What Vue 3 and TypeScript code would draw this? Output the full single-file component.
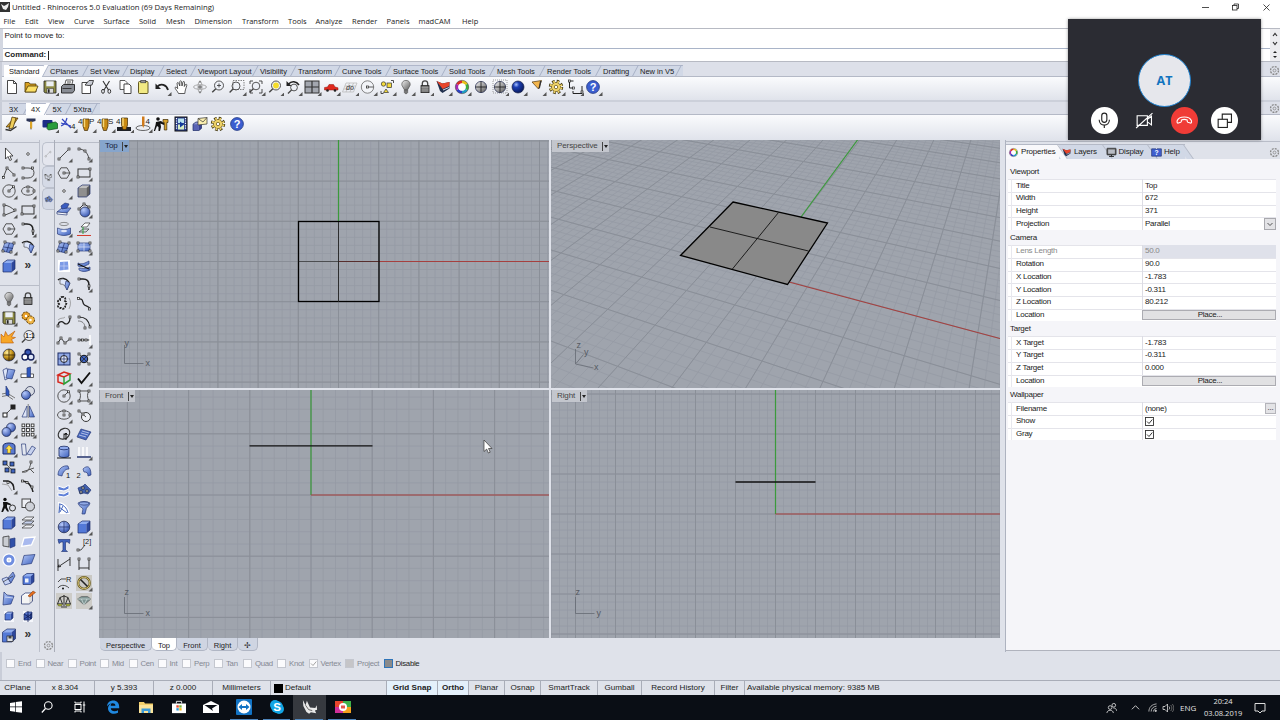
<script setup lang="ts">
import { computed, ref } from 'vue'

interface Cell { label: string; w: number }
interface PropRow { label: string; value?: string; kind?: 'select' | 'button' | 'file' | 'check' | 'disabled' }

const menus: Cell[] = [
  { label: 'File', w: 21.5 }, { label: 'Edit', w: 23 }, { label: 'View', w: 26 }, { label: 'Curve', w: 29.5 },
  { label: 'Surface', w: 35.5 }, { label: 'Solid', w: 27 }, { label: 'Mesh', w: 28.5 }, { label: 'Dimension', w: 47.5 },
  { label: 'Transform', w: 46 }, { label: 'Tools', w: 27.5 }, { label: 'Analyze', w: 36.5 }, { label: 'Render', w: 34.5 },
  { label: 'Panels', w: 32 }, { label: 'madCAM', w: 43.5 }, { label: 'Help', w: 30 },
]

const toolTabs: Cell[] = [
  { label: 'Standard', w: 41 }, { label: 'CPlanes', w: 40 }, { label: 'Set View', w: 40 }, { label: 'Display', w: 36 },
  { label: 'Select', w: 32 }, { label: 'Viewport Layout', w: 62 }, { label: 'Visibility', w: 38 }, { label: 'Transform', w: 44 },
  { label: 'Curve Tools', w: 51 }, { label: 'Surface Tools', w: 56 }, { label: 'Solid Tools', w: 48 }, { label: 'Mesh Tools', w: 50 },
  { label: 'Render Tools', w: 56 }, { label: 'Drafting', w: 37 }, { label: 'New in V5', w: 43 },
]
const camTabs: Cell[] = [
  { label: '3X', w: 22 }, { label: '4X', w: 21.5 }, { label: '5X', w: 21 }, { label: '5Xtra', w: 26 },
]
const activeTool = ref('Standard')
const activeCam = ref('4X')

// ---- icon building blocks, all on an 18 x 18 canvas ----
const B = '#3f63bd'
const node = (x: number, y: number) => `<rect x="${x - 1}" y="${y - 1}" width="2" height="2" fill="#fff" stroke="#222" stroke-width=".7"/>`
const line = (d: string, c = '#3a3a3a', w = 0.9) => `<path d="${d}" fill="none" stroke="${c}" stroke-width="${w}"/>`
const fill = (d: string, c = 'url(#gBlue)', s = '#2a3b78') => `<path d="${d}" fill="${c}" stroke="${s}" stroke-width=".7"/>`
const ball = (x: number, y: number, r: number, c = 'url(#gBall)') => `<circle cx="${x}" cy="${y}" r="${r}" fill="${c}" stroke="#1a2346" stroke-width=".7"/>`
const cube = (x: number, y: number, s: number, a = '#8fadf0', b = '#5379d8', c = '#2d479c') =>
  `<path d="M${x} ${y + s * 0.25}l${s * 0.35} ${-s * 0.25}h${s * 0.65}l${-s * 0.3} ${s * 0.25}z" fill="${a}"/>` +
  `<path d="M${x} ${y + s * 0.25}h${s * 0.7}v${s * 0.75}h${-s * 0.7}z" fill="${b}"/>` +
  `<path d="M${x + s * 0.7} ${y + s * 0.25}l${s * 0.3} ${-s * 0.25}v${s * 0.75}l${-s * 0.3} ${s * 0.25}z" fill="${c}"/>` +
  `<path d="M${x} ${y + s * 0.25}l${s * 0.35} ${-s * 0.25}h${s * 0.65}v${s * 0.75}l${-s * 0.3} ${s * 0.25}h${-s * 0.7}z" fill="none" stroke="#1b2b66" stroke-width=".7"/>`
const lens = (x: number, y: number, r = 3.6) => `<circle cx="${x}" cy="${y}" r="${r}" fill="#eef1f7" stroke="#444" stroke-width=".9"/><path d="M${x - r * 0.7} ${y + r * 0.7}l-3.6 3.6" stroke="#444" stroke-width="1.4"/>`
const mill = `<path d="M5.500 3h6v7l-1.500 4.500h-3L5.500 10z" fill="#c88a14" stroke="#3d2a05" stroke-width=".7"/><path d="M7 3v8" stroke="#f6d878" stroke-width="1.400"/>`
const help = `<circle cx="9" cy="9" r="6.4" fill="#3b5ed0" stroke="#23387f" stroke-width=".8"/><text x="9" y="12.9" text-anchor="middle" font-size="11" font-weight="700" fill="#fff">?</text>`
const gear = `<circle cx="9" cy="9" r="5.6" fill="none" stroke="#3f350f" stroke-width="3.2" stroke-dasharray="2.5 1.9"/><circle cx="9" cy="9" r="4.6" fill="#efd368" stroke="#5b4a12" stroke-width=".7"/><circle cx="9" cy="9" r="5.4" fill="none" stroke="#efd368" stroke-width="2" stroke-dasharray="1.7 2.6" stroke-dashoffset="-.4"/><circle cx="9" cy="9" r="1.7" fill="#fff" stroke="#5b4a12" stroke-width=".7"/>`
const bulb = `<path d="M9 2.400c-2.700 0-4.200 1.900-4.200 4 0 1.900 1.700 2.900 2.300 5.100h3.800c.6-2.200 2.300-3.200 2.300-5.100 0-2.100-1.500-4-4.200-4z" fill="url(#gGray)" stroke="#555" stroke-width=".7"/><path d="M7.300 12h3.400v2.500l-1 1.200H8.300l-1-1.200z" fill="#777" stroke="#444" stroke-width=".5"/>`
const lock = `<path d="M6.300 8V5.600a2.700 2.700 0 0 1 5.400 0V8" fill="none" stroke="#444" stroke-width="1.300"/><rect x="5" y="7.600" width="8" height="7" fill="#777" stroke="#222" stroke-width=".8"/><path d="M5.500 9.500h7M5.500 11.200h7M5.500 12.900h7" stroke="#aaa" stroke-width=".6"/>`
const save = `<path d="M3 3h12v12H4.200L3 13.800z" fill="#8d8b45" stroke="#222" stroke-width=".8"/><rect x="5.300" y="3.300" width="7.400" height="5" fill="#eceff4"/><rect x="6" y="10.500" width="6.300" height="4.500" fill="#d8d8d8" stroke="#333" stroke-width=".5"/><path d="M7 11.200h1.600v3.500H7z" fill="#222"/>`
const wheel = `<g fill="none" stroke-width="2.800"><path d="M9 3.800a5.200 5.200 0 0 1 4.500 2.600" stroke="#e8c21a"/><path d="M13.500 6.400a5.200 5.200 0 0 1 0 5.200" stroke="#3fae3b"/><path d="M13.500 11.600A5.200 5.200 0 0 1 9 14.200" stroke="#1f9ec4"/><path d="M9 14.200a5.200 5.200 0 0 1-4.500-2.600" stroke="#2b3fc4"/><path d="M4.500 11.600a5.200 5.200 0 0 1 0-5.200" stroke="#a52ab4"/><path d="M4.500 6.400A5.200 5.200 0 0 1 9 3.800" stroke="#dc2d24"/></g><circle cx="9" cy="9" r="6.700" fill="none" stroke="#333" stroke-width=".5"/><circle cx="9" cy="9" r="3.600" fill="#fff"/>`
const wedge = `<path d="M2.500 3l6 2.500 7-1.500v6.500L8.500 15 6 13z" fill="#20304e"/><path d="M2.500 3l6 2.500 7-1.500-.3 4L8.700 11z" fill="#e8452a"/><path d="M9 12l6-2.500" stroke="#e9e9f2" stroke-width=".9"/>`

const icons: Record<string, string> = {
  new: `<path d="M4.500 2.500h6l3 3v10h-9z" fill="#fff" stroke="#333" stroke-width=".9"/><path d="M10.500 2.500v3h3" fill="none" stroke="#333" stroke-width=".9"/>`,
  open: `<path d="M3 14V4.500h4l1 1.500h6v8z" fill="#d9a120" stroke="#4e3a08" stroke-width=".8"/><path d="M3 14l3-6h10l-2.500 6z" fill="#fbdf66" stroke="#4e3a08" stroke-width=".8"/>`,
  save,
  print: `<path d="M5.500 8l1.500-6h7l-1.500 6" fill="#fff" stroke="#333" stroke-width=".8"/><path d="M2.500 8.500l2-2h11v6l-2 2.500h-11z" fill="#888c94" stroke="#222" stroke-width=".9"/><path d="M3.500 10.500h9M8 4h4M7.500 6h4" stroke="#222" stroke-width=".8"/>`,
  page: `<path d="M4 4.500h8.500v11H4z" fill="#fff" stroke="#333" stroke-width=".9"/><path d="M7 7l4-4.500h4.500L14 7l-3 .5z" fill="#c9ccd4" stroke="#222" stroke-width=".8"/>`,
  cut: line('M6 3l5.500 9M12.500 3L7 12', '#333', 1.1) + `<ellipse cx="6" cy="13.300" rx="1.400" ry="2" fill="none" stroke="#333"/><ellipse cx="12.300" cy="13.300" rx="1.400" ry="2" fill="none" stroke="#333"/>`,
  copy: `<path d="M4 2.500h5l2 2v7H4z" fill="#fff" stroke="#333" stroke-width=".8"/><path d="M8 6h5l2 2v7.500H8z" fill="#fff" stroke="#333" stroke-width=".9"/>`,
  paste: `<rect x="4.500" y="3.500" width="9.500" height="12" rx="1" fill="#f2ea84" stroke="#544a12" stroke-width=".9"/><rect x="6.800" y="2.300" width="5" height="2.500" fill="#999" stroke="#333" stroke-width=".6"/>`,
  undo: `<path d="M4.500 8.500c3-3.500 9-2 10.500 3.500" fill="none" stroke="#222" stroke-width="1.800"/><path d="M2.500 5.500v5.500h5.500z" fill="#222"/>`,
  hand: `<path d="M6.500 15.500c-1-2.500-3.500-4.500-3.500-6 .8-.8 1.800 0 2.700 1.200L5 5c.9-1 1.600-.3 1.900.6L7.800 8V3.400c.7-.9 1.500-.6 1.700.2L10 8l1-4.200c.7-.7 1.500-.3 1.500.5L12.300 8.500l1.200-2c.8-.6 1.500 0 1.300.8-.6 2.700-1.800 4.700-2 8.200z" fill="#fff" stroke="#333" stroke-width=".8"/>`,
  orbit: `<ellipse cx="9" cy="9" rx="6.500" ry="2.300" fill="none" stroke="#999" stroke-width=".8"/><ellipse cx="9" cy="9" rx="2" ry="6" fill="none" stroke="#999" stroke-width=".8"/><path d="M9 7v4M7 9h4" stroke="#444" stroke-width=".8"/><path d="M8 4.500L9 2.500l1 2zM8 13.500l1 2 1-2z" fill="#555"/>`,
  zoom: lens(10, 7.5, 4.5) + line('M8 7.500h4M10 5.500v4', '#444', 0.9),
  zoomWin: lens(8, 8, 4) + `<rect x="5" y="2.500" width="11" height="9" fill="none" stroke="#555" stroke-width=".7" stroke-dasharray="1.500 1"/>`,
  zoomExt: lens(9, 8, 3.8) + line('M3 6V3h3M12 3h3v3M15 11v4h-3M3 11v4h3'),
  zoomSel: lens(10, 7.5, 4.5) + `<circle cx="10" cy="7.500" r="2.900" fill="#f4dc2a"/>`,
  undoView: lens(10, 9.5, 3.4) + line('M4.500 6c3-3.500 8-3 10.500 1', '#222', 1.5) + `<path d="M2.500 3v5h5z" fill="#222"/>`,
  views: `<rect x="2" y="3" width="14" height="12" fill="#a3a7af" stroke="#333"/><path d="M9 3v12M2 9h14" stroke="#333" stroke-width="1.200"/>`,
  car: `<path d="M2.500 9.500l3-.5 1.500-2.500h4.500l1.500 2.500 3 .8v2.200h-13.500z" fill="#e0281d" stroke="#8a1710" stroke-width=".5"/><circle cx="5.500" cy="12.500" r="1.300" fill="#222"/><circle cx="13" cy="12.500" r="1.300" fill="#222"/>`,
  cplane: `<path d="M5 5h11l-3.500 9H1.500zM8.500 5L5 14M12.500 5L9 14M4 8h11M2.800 11h11" fill="none" stroke="#b4b4b4" stroke-width=".7"/><text x="5" y="12" font-size="7" font-style="italic" fill="#333">do</text>`,
  circ: `<circle cx="8.500" cy="9" r="6.200" fill="#f2f4f8" stroke="#666" stroke-width=".8"/>` + node(8.5, 9) + line('M9.500 9h5', '#333', 0.8),
  select: line('M13 2.500h2.500V5M3 13v2.500h2.500') + `<rect x="9" y="5" width="4.500" height="4.500" fill="#f4da3c" stroke="#333" stroke-width=".7"/><circle cx="5.500" cy="6" r="2.200" fill="#f4da3c" stroke="#333" stroke-width=".7"/><path d="M8 11l2.500 3.500H5.500z" fill="#f4da3c" stroke="#333" stroke-width=".7"/>`,
  bulb, lock, wheel, wedge, gear, help,
  wire: ball(9, 9, 5.6, 'url(#gGray)') + line('M3.500 9h11M9 3.500v11', '#111', 0.8),
  wireBox: `<rect x="2" y="2" width="14" height="13" fill="none" stroke="#777" stroke-dasharray="1 1" stroke-width=".7"/>` + ball(9, 9, 5.6, 'url(#gGray)') + line('M3.500 9h11M9 3.500v11', '#111', 0.8),
  sphere: ball(9, 9, 6, 'url(#gBlueBall)'),
  spot: `<path d="M4 4l9.500-1.500L10.500 11z" fill="#f3b54c" stroke="#50370d" stroke-width=".7"/><path d="M12 3l-1.500 8 1.500-1 1.500-7z" fill="#333"/>`,
  dims: line('M7.500 3H3.500v7h4M7 13v2.500h9V8', '#222', 1) + node(3.5, 3) + node(7.5, 10) + node(16, 14),
  sheet: fill('M3 12l8-9h4l-6 9z', '#d6a32b', '#3d2a05') + fill('M6 14l3-12 4 1-3 10z', '#f0ce5b', '#3d2a05') + line('M2.500 14.500l5 1 6-4', '#333', 1.4),
  drill: `<path d="M4.500 3.500h9v2.500l-3.500 1v5L9 15l-1-3V7L4.500 6z" fill="#2b3457"/><path d="M8 6.500h2.200v6L9 14.500 8 12z" fill="#dca528"/>`,
  stock: `<rect x="1.500" y="5" width="10" height="7.500" rx="1" fill="#1b2c86"/><path d="M6.500 8.500l8-1.500 2 1.500v5l-9 1.500-1.500-1.500z" fill="#2a9d3c" stroke="#0c4718" stroke-width=".7"/>`,
  axis4: line('M2 11c3-1 5-4 6-8M3 4l9 9M2 8l10 3', '#3346c0', 1.2) + `<text x="12" y="14" font-size="8" fill="#222">4</text>`,
  p4: `<g transform="translate(-.5 1)">${mill}</g><text x="0" y="9" font-size="8" fill="#222">4</text><text x="11" y="9" font-size="8" fill="#222">P</text>`,
  s4: `<g transform="translate(-.5 1)">${mill}</g><text x="0" y="9" font-size="8" fill="#222">4</text><text x="11" y="9" font-size="8" fill="#222">S</text>`,
  b4: `<rect x="1" y="12" width="14" height="4" fill="#1f2126"/>${mill}<text x="0" y="9" font-size="8" fill="#222">4</text>`,
  axisC: `<ellipse cx="9" cy="13" rx="7" ry="2.500" fill="none" stroke="#444" stroke-width=".8"/><path d="M8 1.500h2.500v8L9.300 13 8 10z" fill="#d07b1c"/><text x="11.500" y="9" font-size="8" fill="#222">4</text>`,
  worker: `<circle cx="5" cy="4" r="1.800" fill="#111"/><path d="M3 7l5-1 4 3-1 1-3.500-1.500L8 12l-1 4H5.500V12L4 11l-2 5H.8L2.500 10z" fill="#111"/><path d="M10 4.500h5v3h-1.200V15h-2.500V7.500H10z" fill="#d9a32b" stroke="#3d2a05" stroke-width=".7"/>`,
  film: `<rect x="3" y="2" width="12" height="14" fill="#2a3f8c" stroke="#111"/><rect x="6" y="3.500" width="6" height="4.500" fill="#b8e3ef"/><rect x="6" y="9.500" width="6" height="5" fill="#d9efc4"/><path d="M4.500 3v12M13.500 3v12" stroke="#fff" stroke-width="1.200" stroke-dasharray="1.200 1.200"/><path d="M8 6.500l4 3-4 3z" fill="#113a9c"/>`,
  mail: cube(2, 7, 8.5, '#8b93d4', '#5862b4', '#3a4290') + `<path d="M7 3.500l9-1v6.500l-9 1z" fill="#fbefb0" stroke="#333" stroke-width=".7"/><path d="M7 3.500l5 3.500 4-4.500" fill="none" stroke="#333" stroke-width=".7"/>`,
  // side bars
  pointer: `<path d="M5.500 3v11l2.500-2.500 1.800 4 1.800-.8-1.800-3.700H13z" fill="#fff" stroke="#222" stroke-width=".8"/>`,
  point: `<circle cx="9" cy="9" r="1.300" fill="#fff" stroke="#333" stroke-width=".8"/>`,
  poly: line('M3.500 13L7 4l7.500 7') + node(3.5, 13.5) + node(7, 4) + node(14, 11),
  ctrl: line('M4 14h5c4 0 6-2 6-5.500S12 4 9 4H4') + node(4, 4) + node(13.5, 4) + node(4, 14),
  circle: `<circle cx="9" cy="9" r="6.200" fill="none" stroke="#444" stroke-width=".9"/>` + line('M9 9l4-4', '#333', 0.8) + node(9, 9) + node(13.5, 4.8),
  ellipse: `<ellipse cx="9" cy="9" rx="6.500" ry="4.200" fill="none" stroke="#444" stroke-width=".9"/>` + node(9, 9) + node(9, 5) + node(15, 9),
  arc: line('M4 3.500v11M4 4c4 .5 8 2.500 11 6L4 14.500') + node(4, 4) + node(4, 14) + node(15, 9),
  rect: `<rect x="3" y="5" width="12" height="8" fill="none" stroke="#333"/>` + node(3, 13) + node(15, 5),
  polygon: `<path d="M6 3.800h6l3 5.200-3 5.200H6L3 9z" fill="none" stroke="#444" stroke-width=".9"/>` + node(9, 9) + line('M10 9h5', '#333', 0.8),
  fillet: line('M4 4h4c4 0 6 2.500 6 6v5', '#222', 1.5) + node(4, 4) + node(14, 11),
  surf: fill('M5 4.500l9 1-3 9.500-9-2z') + line('M9.500 5l-3 9M4 9l9 1.500', '#1b2b66', 0.7) + node(5, 4) + node(14, 5) + node(3, 13) + node(11, 14),
  sweep: fill('M5 5c3-2 7-1 10 3l-3 7c-1-4-3-6-7-6z', '#dfe7fb', '#555') + fill('M11 6l4 2-3 7-2-4z') + line('M3 5c3-3 8-2 11 2', '#222', 1.2),
  cube: cube(3, 3, 12),
  more: `<text x="5.500" y="12" font-size="12" font-weight="700" fill="#333">»</text>`,
  gears: `<circle cx="7" cy="7" r="4" fill="#e79f28" stroke="#5c3a07" stroke-dasharray="2 1"/><circle cx="11.500" cy="11" r="4" fill="#f0b646" stroke="#5c3a07" stroke-dasharray="2 1"/><circle cx="7" cy="7" r="1.200" fill="#fff"/><circle cx="11.500" cy="11" r="1.300" fill="#fff"/>`,
  explode: `<path d="M1 15V6l3 3 1.500-5.500L8 8l7-5-3.500 6 4 .5-4 2 2 3.500z" fill="#f7a626" stroke="#b8570a" stroke-width=".6"/>`,
  zoom11: lens(10, 7.5, 5) + `<text x="6.300" y="10" font-size="6.500" font-weight="700" fill="#222">1:1</text>`,
  gold: ball(9, 9, 6, 'url(#gGold)') + line('M3 9h12M9 3v12', '#3d2a05', 0.8),
  rgb: `<circle cx="9" cy="6.500" r="3" fill="#3656b4" stroke="#14205a" stroke-width="1.300"/><circle cx="6" cy="11" r="3" fill="#fff" stroke="#14205a" stroke-width="1.300"/><circle cx="12" cy="11" r="3" fill="#dfe6f8" stroke="#14205a" stroke-width="1.300"/>`,
  extr: fill('M3 5l4-2 2 10-4 2z', '#dfe6f8') + fill('M8 4l7 1-3 9-6-1z'),
  trim: fill('M2 9h12.500v3.500H2z', '#fff', '#222') + fill('M8 3l3.500-1v10H8z', '#2f58be'),
  split: line('M2 10l5-1 8 5M2 12.500l5-1 6 4', '#777', 1) + fill('M6 2l3 5v5l-3-1z', '#2f58be'),
  boolA: ball(11, 7, 4.5, '#d7dbe3') + ball(7, 11, 4.5),
  boolB: ball(11, 6.5, 4.5) + ball(6.5, 11, 4.5),
  move: line('M5 13l8-8', '#444') + `<rect x="3" y="11" width="4" height="4" fill="#fff" stroke="#222"/><rect x="11" y="3" width="4" height="4" fill="#222" stroke="#222"/>`,
  mirror: fill('M8 4v11H3z', '#dfe6f8') + fill('M10.500 4v11h5z') + line('M9.200 2v14', '#555', 0.7),
  array: [3, 7.6, 12.2].map(y => [3, 7.6, 12.2].map(x => `<rect x="${x}" y="${y}" width="2.800" height="2.800" fill="#fff" stroke="#222" stroke-width=".8"/>`).join('')).join(''),
  up: `<path d="M3 6c0-4 12-4 12 0v8H3z" fill="#5a79cf" stroke="#1b2b66"/><path d="M9 5l3.500 4h-2v4h-3V9h-2z" fill="#ffe14a" stroke="#8a6a08" stroke-width=".5"/>`,
  shear: fill('M2.500 4h4l1 11h-4z', '#e3e7f0') + fill('M8 14l5-8 3.500 2-4.500 7z', '#c6d1ee'),
  blocks: [[3, 3], [10, 4], [5, 10], [11, 11]].map(([x, y]) => `<rect x="${x}" y="${y}" width="4" height="4" fill="${B}" stroke="#111" stroke-width=".7"/>`).join('') + line('M6 6l6 6', '#333', 0.7),
  scale: line('M3 14c6 1 7-2 9-9M3 14l12-4M11 11l4 4', '#555', 1) + node(12, 4),
  curve: line('M3 4c5 0 10 4 11 11', '#222', 1.5) + node(3.5, 4) + node(8, 5.5) + node(13, 10),
  curveD: line('M3 4h5c4 1 6 4 6 9', '#222', 1.5) + line('M2 7l6 1 4 6', '#888', 0.7) + node(8, 5.5),
  carry: `<circle cx="5" cy="3.500" r="1.700" fill="#111"/><path d="M3 6h4l4 2-.5 1.200L7 8.500V11l2 4.500H7.200L5 12l-2 4H1.300L3.300 10z" fill="#111"/><circle cx="12.500" cy="12" r="3" fill="#dfe2ea" stroke="#333"/>`,
  group: `<rect x="3" y="3" width="8.500" height="8.500" fill="#eef0f5" stroke="#444"/><circle cx="11" cy="10.500" r="4.500" fill="#cfd2d9" stroke="#444"/>`,
  stack: fill('M3 6l4-3h8l-3 3z', '#eef0f5', '#333') + fill('M3 10l4-3h8l-3 3z', '#c9d4ef', '#333') + fill('M3 14l4-3h8l-3 3z', '#eef0f5', '#333'),
  door: fill('M3 4l6-1v11l-6-1z', '#c9ccd2', '#222') + fill('M10 6l5-1v8l-5 2z', '#2f4fa8'),
  plane: fill('M5 4.500l11-1-3.500 9-10 1.500z'),
  planeG: `<path d="M5 5l11-1-3.500 8-10 1.500z" fill="#a8b9ee" stroke="#fff" stroke-width="1.300"/>`,
  ring: `<circle cx="9" cy="9" r="4" fill="none" stroke="#fff" stroke-width="5.500"/><circle cx="9" cy="9" r="4" fill="none" stroke="#6f8ee0" stroke-width="3"/>`,
  fold: fill('M2 9l5-2 4 6-6 2z', '#c6d3f4') + fill('M8 8l5-6 2 4-4 7z') + line('M3 12l10-6', '#333', 0.7),
  cubeOpen: cube(4, 3.5, 11) + `<rect x="6" y="8.500" width="3.500" height="4" fill="#f0f3fa"/>`,
  bend: fill('M4 3l3 3 7 1-3 8-8 1z') + line('M5 8l8 1', '#dfe6f8', 0.8),
  cubePen: cube(2.5, 4, 11, '#fff', '#f4f4f4', '#ddd') + `<path d="M9 7l5-5 2.500 1.500L11 8z" fill="#e46d1d" stroke="#7a3206" stroke-width=".5"/>`,
  cubeS: `<rect x="4" y="4" width="10" height="11" fill="#f5f7fc"/>` + cube(5, 5, 8),
  cubeX: `<rect x="4" y="4" width="10" height="11" fill="#f5f7fc"/>` + cube(5, 5, 8, '#5b7ad2', '#3c5ab4', '#20377f') + line('M9 4v11M5 7l8 5M5 12l8-5', '#14215a', 0.8),
  cubeSave: cube(2.5, 3, 13) + `<rect x="7" y="10" width="6" height="5.500" fill="#dfe3ea" stroke="#222" stroke-width=".7"/><rect x="8.500" y="10" width="3" height="2.500" fill="#444"/>`,
  seg: line('M4 14L14 4') + node(4, 14) + node(14, 4),
  arcN: line('M4 4c5 0 9 4 10 10') + node(4, 4) + node(10, 6) + node(14, 14),
  cubeGray: cube(3, 3, 12, '#bfbfbf', '#8f8f8f', '#5f5f5f'),
  stack2: fill('M2 11l5-4h9l-4 5z') + fill('M2 11v2l10 1v-2z', '#fff') + fill('M6 5l4-3 4 1-2 4-5 1z', '#3a5cc0'),
  ballN: ball(10, 11, 5) + line('M4 8l5-5 5 3', '#222') + node(4, 8) + node(9, 3) + node(14, 6),
  lathe: `<ellipse cx="9" cy="4" rx="4.500" ry="1.600" fill="none" stroke="#666" stroke-width=".7"/>` + fill('M2.500 8c4 2 9 2 13 0v6c-4 2-9 2-13 0z') + `<ellipse cx="9" cy="11" rx="3" ry="1.300" fill="#dfe6f8"/>`,
  section: line('M2 15.500h14', '#d23a2b', 1) + fill('M4 12l4-3h6l-3 3z', '#d6dae2', '#333') + fill('M6 7l4-4h5l-3 4z', '#fff', '#333') + line('M8 14V7', '#2ca03a', 1),
  patch: fill('M3 5h12v8H3z') + line('M9 5v8M3 9h12', '#dfe6f8', 0.7) + node(3, 5) + node(15, 5) + node(3, 13) + node(15, 13),
  glow: `<rect x="3" y="3" width="12" height="12" fill="#fff"/><path d="M5 5l8-.5.5 8-9 1z" fill="#7d9be6"/>` + line('M9 4.500v8.500M4.500 9h9', '#c6d3f4', 0.7),
  loft: fill('M3 6c4 2 7 0 11-2v3c-4 2-7 4-11 2z') + fill('M4 11c3 1 7 1 11-1v3c-4 2-8 2-11 0z') + line('M3 7l11 5', '#111', 1.2),
  blend: line('M3.500 5c6-1 3 4 6 6 2 1.500 5 1 5.500 4', '#222', 1.3) + node(3.5, 4.5) + node(14.5, 15),
  blob: `<path d="M7 3c3-1 4 2 3 4 2 1 2 3 0 4 1 3-2 5-4 3-3 0-4-2-2-4-2-2-1-4 1-4 0-2 1-3 2-3z" fill="none" stroke="#222" stroke-width="1.800" stroke-dasharray="2 1"/><path d="M14 4c2 3 2 7 0 11" fill="none" stroke="#888" stroke-width=".7"/>`,
  wave: line('M3 13c0-5 4-5 6-3s6 1 6-5', '#222', 1.2) + line('M3 7c3-3 6-1 7-3', '#888', 0.7) + node(3, 13) + node(15, 4),
  offset: line('M4 4c6 0 10 4 11 10', '#222', 1.2) + line('M3 8c4 0 7 2 7 7', '#666', 0.8) + node(4, 4) + node(15, 14) + node(10, 15),
  zig: line('M3 12l3-5 4 5 5-4', '#222') + node(3, 12) + node(6, 7) + node(10, 12) + node(15, 8),
  dots: line('M3 9h12', '#222', 1) + node(4, 9) + node(7.5, 9) + node(11, 9) + line('M15 4v10', '#fff', 1.5),
  tgt: `<rect x="3" y="3" width="12" height="12" fill="#91a9e6" stroke="#1b2b66"/><circle cx="9" cy="9" r="3.500" fill="#e6ebf8" stroke="#222"/><path d="M9 3v12M3 9h12" stroke="#1b2b66" stroke-width=".7"/>`,
  tgt2: `<circle cx="9" cy="9" r="3.800" fill="${B}" stroke="#111"/>` + line('M3 3l12 12M15 3L3 15', '#222', 0.7) + node(4, 4) + node(14, 4) + node(4, 14) + node(14, 14),
  boxRG: line('M3 6l6-3 6 2-6 3zM3 6v7l6 2', '#d6281f', 1.5) + line('M9 8v7l6-4V5', '#2ca03a', 1.5),
  check: `<path d="M3 9.500l3.500 4.500L15 3.500" fill="none" stroke="#111" stroke-width="1.900"/>`,
  closed: line('M4 4h10c-2 3-2 6 0 10H4c2-4 2-7 0-10z', '#444', 0.9) + node(4, 4) + node(14, 4) + node(4, 14) + node(14, 14),
  tang: `<circle cx="11" cy="11" r="4.500" fill="#eef0f5" stroke="#333"/>` + line('M3 4l8 7') + node(4, 5) + node(8, 8),
  spiral: line('M9 14c-5 1-7-3-5-7s8-5 10-2-1 9-5 9V9h3', '#333', 1.1) + line('M11 8v7M9.500 10L11 8l1.500 2', '#111', 1),
  hatch: fill('M6 4l10 3-5 8-9-3z', '#4666bb') + line('M4 10l7 2M6 8l7 2M7 6l7 2', '#cbd6f3', 0.8),
  cyl: `<path d="M4 5v8c2 2 8 2 10 0V5z" fill="url(#gBlue)" stroke="#1b2b66" stroke-width=".8"/><ellipse cx="9" cy="5" rx="5" ry="1.800" fill="#8ea9ec" stroke="#1b2b66" stroke-width=".8"/>` + line('M2 15h14', '#111', 1),
  hair: line('M4 4v9M8 4v9M12 4v9', '#fff', 1.5) + line('M2 14h14', '#1b2b66', 1.4),
  q1: fill('M3 13C3 7 8 3 13 4l1 3c-4 0-6 3-7 7z') + `<text x="11" y="16" font-size="7.500" fill="#111">1</text>`,
  q2: fill('M8 7c4-4 8-3 8 6l-3 1c0-3-1-4-4-4z') + `<text x="1.500" y="16" font-size="7.500" fill="#111">2</text>`,
  ribbon: `<path d="M3 5l6 2 5-3v4l-5 2-6-1zM3 12l6 1 5-3v4l-5 2-6-1z" fill="#5f80d8" stroke="#fff" stroke-width="1"/>`,
  flower: fill('M3 7l5-2 2-2 3 3 3 3-3 4-4-1-4 1z', '#4160ae') + node(8, 7) + node(12, 10) + node(6, 11),
  fan: `<path d="M3 3c6 0 11 5 12 12H5z" fill="#fff"/>` + line('M4 5c4 0 8 4 9 9M4 8l8 6M5 5l-1 9M8 7l-3 6', B, 1),
  funnel: fill('M3 4c3-2 9-2 12 0-1 4-4 4-4 7l-1 4H7l1-5C7 8 4 8 3 4z') + `<ellipse cx="9" cy="4.500" rx="5" ry="1.600" fill="#91a9e6" stroke="#1b2b66" stroke-width=".6"/>`,
  globe: ball(9, 9, 5.8) + line('M3.500 9h11M9 3.500v11', '#1b2b66', 0.7),
  textT: fill('M3 3.500h12l-.5 4-2-1.500h-2V14l2 1.500H6.500L8 14V6H6L4 7.500z', B),
  leader: line('M2 14h4l4-5') + node(3, 14) + `<text x="8" y="8.500" font-size="7.500" fill="#222">[2]</text>`,
  dimA: line('M3 4v12M15 2v9M3 12l12-8M3 12l3-.5M3 12l1-2.500', '#222'),
  dimL: line('M4 5v10M14 5v10M4 13h10', '#222') + node(4, 4) + node(14, 4),
  radius: line('M3 8l3-3h5M3 14c2-3 7-4 11 0') + `<circle cx="8" cy="14.500" r="1" fill="#111"/><text x="11" y="8" font-size="7.500" fill="#222">R</text>`,
  compass: `<rect x="1" y="1" width="16" height="16" fill="#c9c8c4"/><circle cx="9" cy="9" r="5.800" fill="none" stroke="#6a5c22" stroke-width="2.200"/><circle cx="9" cy="9" r="5.800" fill="none" stroke="#e0cd7c" stroke-width=".8"/><path d="M5.500 5.500l7 7" stroke="#222" stroke-width="1.600"/>`,
  balance: `<rect x="1" y="1" width="16" height="16" fill="#cdccc8"/>` + line('M9 3v11M5 5.500L9 4l4 1.500M5 5.500L2.500 12h5zM13 5.500L10.500 12h5zM6 15h6', '#222') + `<path d="M2.500 12h5l-1 2h-3zM10.500 12h5l-1 2h-3z" fill="#b9c23a" stroke="#333" stroke-width=".5"/>`,
  gem: `<rect x="1" y="1" width="16" height="16" fill="#cdccc8"/><path d="M2.500 7l4-2.500h6L16 7l-7 6z" fill="#7d9492" stroke="#555" stroke-width=".6"/><path d="M2.500 7H16M6.500 7L9 13l3-6" stroke="#e5efee" stroke-width=".6" fill="none"/>`,
  key: line('M4 12l7-7', '#999', 1) + `<circle cx="4.500" cy="12" r="1.300" fill="#dfe2ea" stroke="#999"/><circle cx="12" cy="5" r="1.300" fill="#dfe2ea" stroke="#999"/>`,
  clump: `<path d="M3 5h4v3h3V5h4v4h-3v5H8v-3H4z" fill="none" stroke="#666" stroke-width="1.200"/>` + node(4, 5) + node(13, 5) + node(9, 13),
  screen: `<rect x="1.500" y="2" width="15" height="11" rx="1" fill="#555" stroke="#222"/><rect x="3.500" y="4" width="11" height="7" fill="#b9bcc4"/><path d="M5 15.500h8M9 13v2" stroke="#222" stroke-width="1.500"/>`,
  book: `<path d="M1 3h7l1 1 1-1h7v12h-7l-1 1-1-1H1z" fill="#3f5fd0" stroke="#1b2b66"/><text x="9" y="13" text-anchor="middle" font-size="11" font-weight="700" fill="#fff">?</text>`,
}

// trailing * marks a button with a flyout
const parse = (s: string) => s.trim().split(/\s+/).map(n => ({ name: n.replace('*', ''), fly: n.endsWith('*') }))
const svg = (name: string) => icons[name] ?? ''

const stdIcons = parse(`new open save* print page cut copy paste undo* hand orbit zoom zoomWin* zoomExt* zoomSel* undoView*
  views* car* cplane* circ* select* bulb* lock* wedge* wheel* wire wireBox* sphere* spot* gear* dims* help*`)
const camIcons = parse('sheet drill stock* axis4* p4* s4* b4* axisC* worker film mail gear help')
const mainTop = parse(`pointer* point* poly* ctrl* circle* ellipse* arc* rect* polygon* fillet* surf* sweep* cube* more`)
const mainBottom = parse(`bulb* lock save* gears explode zoom11 gold* rgb* extr* trim split boolA move* mirror boolB* array*
  up* shear blocks scale curveD* curve carry group cube stack door planeG ring plane fold cubeOpen bend cubePen cubeS cubeX cubeSave more`)
const sideIcons = parse(`seg* arcN* polygon* rect* point* cubeGray stack2 ballN* lathe* section surf* patch* glow loft sweep* fillet*
  blob blend wave offset zig dots* tgt tgt2 boxRG* check* circle* closed* ellipse* tang spiral* hatch cyl hair* q1 q2 ribbon flower
  fan funnel globe* cube* textT leader dimA dimL radius compass* balance gem*`)

// ---- viewports ----
function span(from: number, to: number, origin: number, step: number) {
  const out: number[] = []
  const first = Math.ceil((from - origin) / step)
  const last = Math.floor((to - origin) / step)
  for (let i = first; i <= last; i++) out.push(origin + i * step)
  return out
}
function gridPath(x: number, y: number, w: number, h: number, ox: number, oy: number, step: number) {
  return span(x, x + w, ox, step).map(v => `M${v.toFixed(1)} ${y}V${y + h}`).join('') +
    span(y, y + h, oy, step).map(v => `M${x} ${v.toFixed(1)}H${x + w}`).join('')
}
const topGrid = {
  minor: gridPath(99, 140, 450, 248, 338.5, 261.5, 8.04),
  major: gridPath(99, 140, 450, 248, 338.5, 261.5, 40.2),
}
const frontGrid = {
  minor: gridPath(99, 390, 450, 248, 311, 495, 12.24),
  major: gridPath(99, 390, 450, 248, 311, 495, 61.2),
}
const rightGrid = {
  minor: gridPath(551, 390, 449, 248, 775.5, 514, 8),
  major: gridPath(551, 390, 449, 248, 775.5, 514, 40),
}

// projects a ground-plane point (in major cells) into the perspective view
function project(x: number, y: number) {
  const w = 1 - 0.0353 * x + 0.0768 * y
  const px = (626 + 119.1 * x + 114.5 * y) / w / 3 + 550
  const py = (415 + 23.5 * x - 55.7 * y) / w / 3 + 135
  return `${px.toFixed(1)} ${py.toFixed(1)}`
}
function perspPath(step: number) {
  let d = ''
  for (let x = -14; x <= 7.001; x += step) d += `M${project(x, -5)}L${project(x, 14)}`
  for (let y = -5; y <= 14.001; y += step) d += `M${project(-14, y)}L${project(7, y)}`
  return d
}
const perspMajor = computed(() => perspPath(1))
const perspMinor = computed(() => perspPath(0.2))

const viewTabs: Cell[] = [
  { label: 'Perspective', w: 52 }, { label: 'Top', w: 25 }, { label: 'Front', w: 31 }, { label: 'Right', w: 30 }, { label: '✢', w: 20 },
]

// ---- properties panel ----
const panelTabs = [
  { label: 'Properties', icon: 'wheel', w: 53 },
  { label: 'Layers', icon: 'wedge', w: 44.5 },
  { label: 'Display', icon: 'screen', w: 45.5 },
  { label: 'Help', icon: 'book', w: 36 },
]

const groups: { title: string; rows: PropRow[] }[] = [
  {
    title: 'Viewport',
    rows: [
      { label: 'Title', value: 'Top' }, { label: 'Width', value: '672' }, { label: 'Height', value: '371' },
      { label: 'Projection', value: 'Parallel', kind: 'select' },
    ],
  },
  {
    title: 'Camera',
    rows: [
      { label: 'Lens Length', value: '50.0', kind: 'disabled' }, { label: 'Rotation', value: '90.0' },
      { label: 'X Location', value: '-1.783' }, { label: 'Y Location', value: '-0.311' }, { label: 'Z Location', value: '80.212' },
      { label: 'Location', value: 'Place...', kind: 'button' },
    ],
  },
  {
    title: 'Target',
    rows: [
      { label: 'X Target', value: '-1.783' }, { label: 'Y Target', value: '-0.311' }, { label: 'Z Target', value: '0.000' },
      { label: 'Location', value: 'Place...', kind: 'button' },
    ],
  },
  {
    title: 'Wallpaper',
    rows: [{ label: 'Filename', value: '(none)', kind: 'file' }, { label: 'Show', kind: 'check' }, { label: 'Gray', kind: 'check' }],
  },
]

const osnaps: Cell[] = [
  { label: 'End', w: 29.5 }, { label: 'Near', w: 32 }, { label: 'Point', w: 32.5 }, { label: 'Mid', w: 28.5 }, { label: 'Cen', w: 29 },
  { label: 'Int', w: 24.5 }, { label: 'Perp', w: 32 }, { label: 'Tan', w: 29 }, { label: 'Quad', w: 34 }, { label: 'Knot', w: 31.5 },
  { label: 'Vertex', w: 36.5 }, { label: 'Project', w: 38.5 }, { label: 'Disable', w: 50 },
]

const statusCells: Cell[] = [
  { label: 'CPlane', w: 36 }, { label: 'x 8.304', w: 59 }, { label: 'y 5.393', w: 59 }, { label: 'z 0.000', w: 59 },
  { label: 'Millimeters', w: 58 }, { label: 'Default', w: 116 }, { label: 'Grid Snap', w: 51 }, { label: 'Ortho', w: 31 },
  { label: 'Planar', w: 36 }, { label: 'Osnap', w: 36 }, { label: 'SmartTrack', w: 57 }, { label: 'Gumball', w: 44 },
  { label: 'Record History', w: 73 }, { label: 'Filter', w: 30 },
]
const statusOn = ['Grid Snap', 'Ortho']
</script>

<template>
  <div class="app">
    <svg class="defs" width="0" height="0">
      <defs>
        <linearGradient id="gBlue" x1="0" y1="0" x2="1" y2="1"><stop offset="0" stop-color="#b4c8f8" /><stop offset="1" stop-color="#3c60bd" /></linearGradient>
        <linearGradient id="gGray" x1="0" y1="0" x2="1" y2="1"><stop offset="0" stop-color="#f2f2f2" /><stop offset="1" stop-color="#5c5c5c" /></linearGradient>
        <radialGradient id="gBall" cx=".35" cy=".3" r=".8"><stop offset="0" stop-color="#b6c9fb" /><stop offset="1" stop-color="#2a4aa8" /></radialGradient>
        <radialGradient id="gBlueBall" cx=".35" cy=".3" r=".8"><stop offset="0" stop-color="#a8c2ff" /><stop offset=".3" stop-color="#1c3fb4" /><stop offset="1" stop-color="#07154f" /></radialGradient>
        <radialGradient id="gGold" cx=".35" cy=".3" r=".8"><stop offset="0" stop-color="#fff0a0" /><stop offset=".5" stop-color="#c9971c" /><stop offset="1" stop-color="#3b2a04" /></radialGradient>
      </defs>
    </svg>

    <header class="title-bar">
      <svg class="app-icon" viewBox="0 0 10 10"><rect width="10" height="10" fill="#333" /><path d="M1 2l3 2 2-1 3-2-1 4-2 3-3-1z" fill="#eee" /></svg>
      <span class="title">Untitled - Rhinoceros 5.0 Evaluation (69 Days Remaining)</span>
      <svg class="win-btns" viewBox="0 0 72 12" fill="none" stroke="#222" stroke-width=".8">
        <path d="M2 6.500h7M63.500 3.500l6 6M69.500 3.500l-6 6" />
        <rect x="32.500" y="4.500" width="4.500" height="4.500" /><path d="M34 4.500V3h4.500v4.500H37" />
      </svg>
    </header>

    <nav class="menu">
      <span v-for="m in menus" :key="m.label" :style="{ width: m.w + 'px' }">{{ m.label }}</span>
    </nav>

    <section class="command">
      <div class="history">Point to move to:</div>
      <div class="prompt"><b>Command:</b><i class="caret"></i></div>
      <svg class="spin" viewBox="0 0 10 32" fill="none" stroke="#333" stroke-width="1.200">
        <rect width="10" height="32" fill="#ececef" stroke="none" /><path d="M3 7l2-2.500L7 7M3 13l2 2.500L7 13" />
        <path d="M3 24l2-2 2 2zM3 27l2 2 2-2z" fill="#222" stroke="none" />
      </svg>
    </section>

    <section class="toolbar std">
      <div class="tabs">
        <span v-for="t in toolTabs" :key="t.label" class="tab" :class="{ on: t.label === activeTool }" :style="{ width: t.w + 'px' }" @click="activeTool = t.label">{{ t.label }}</span>
        <svg class="cog" viewBox="0 0 10 10"><circle cx="5" cy="5" r="3.600" fill="none" stroke="#888" stroke-width="1.200" stroke-dasharray="1.800 1" /><circle cx="5" cy="5" r="1.300" fill="none" stroke="#888" stroke-width=".7" /></svg>
      </div>
      <div class="icons">
        <svg v-for="(ic, i) in stdIcons" :key="i" viewBox="0 0 18.75 18"><g v-html="svg(ic.name)"></g><path v-if="ic.fly" d="M18.500 14v4h-4z" fill="#555" /></svg>
      </div>
    </section>

    <section class="toolbar cam">
      <div class="tabs">
        <span v-for="t in camTabs" :key="t.label" class="tab" :class="{ on: t.label === activeCam }" :style="{ width: t.w + 'px' }" @click="activeCam = t.label">{{ t.label }}</span>
        <svg class="cog" viewBox="0 0 10 10"><circle cx="5" cy="5" r="3.600" fill="none" stroke="#888" stroke-width="1.200" stroke-dasharray="1.800 1" /><circle cx="5" cy="5" r="1.300" fill="none" stroke="#888" stroke-width=".7" /></svg>
      </div>
      <div class="icons">
        <svg v-for="(ic, i) in camIcons" :key="i" viewBox="0 0 18.75 18"><g v-html="svg(ic.name)"></g><path v-if="ic.fly" d="M18.500 14v4h-4z" fill="#555" /></svg>
      </div>
    </section>

    <main class="work">
      <aside class="bar main-bar">
        <div class="pair first">
          <svg v-for="(ic, i) in mainTop" :key="i" viewBox="0 0 18.700 18.650"><g v-html="svg(ic.name)"></g><path v-if="ic.fly" d="M17.500 13.500v4h-4z" fill="#555" /></svg>
        </div>
        <div class="pair second">
          <svg v-for="(ic, i) in mainBottom" :key="i" viewBox="0 0 18.700 18.650"><g v-html="svg(ic.name)"></g><path v-if="ic.fly" d="M17.500 13.500v4h-4z" fill="#555" /></svg>
        </div>
      </aside>
      <aside class="side-tabs">
        <div class="vtab on"><svg viewBox="0 0 18 18" v-html="svg('key')"></svg></div>
        <div class="vtab"><svg viewBox="0 0 18 18" v-html="svg('clump')"></svg></div>
        <div class="vtab"><svg viewBox="0 0 18 18" v-html="svg('flower')"></svg></div>
        <svg class="cog low" viewBox="0 0 10 10"><circle cx="5" cy="5" r="3.600" fill="none" stroke="#888" stroke-width="1.200" stroke-dasharray="1.800 1" /><circle cx="5" cy="5" r="1.300" fill="none" stroke="#888" stroke-width=".7" /></svg>
      </aside>
      <aside class="bar side-bar">
        <div class="pair first">
          <svg v-for="(ic, i) in sideIcons" :key="i" viewBox="0 0 18.700 18.650"><g v-html="svg(ic.name)"></g><path v-if="ic.fly" d="M17.500 13.500v4h-4z" fill="#555" /></svg>
        </div>
      </aside>

      <section class="stage">
        <div class="views">
          <div class="view">
            <svg class="scene" viewBox="99 140 450 248">
              <path class="minor" :d="topGrid.minor" /><path class="major" :d="topGrid.major" />
              <path class="green" d="M338.500 140V221" /><path class="red" d="M338.500 261.500H549" />
              <rect x="298.500" y="221.500" width="80.500" height="80" fill="none" stroke="#000" stroke-width="1.300" />
              <path d="M338.500 222v80" stroke="#222" stroke-width=".9" /><path d="M298.500 261.500h80" stroke="#222" stroke-width=".6" />
              <path class="gnomon" d="M124.500 345v18.500h19" /><text x="124.500" y="346">y</text><text x="145.500" y="365.500">x</text>
            </svg>
            <span class="view-label active">Top<i></i></span>
          </div>
          <div class="view">
            <svg class="scene" viewBox="551 140 449 248">
              <path class="minor" :d="perspMinor" /><path class="major" :d="perspMajor" />
              <path class="green" d="M801 217L857.500 140" /><path class="red" d="M789 282L1000 338.500" />
              <path d="M733 202L827.500 223 787.500 284.500 680.500 255.500z" fill="#898989" stroke="#000" stroke-width="1.300" />
              <path d="M778.500 212.500L732 269.500M710 227L808.500 251" stroke="#111" stroke-width=".9" />
              <path class="gnomon" d="M575.500 349v15l18 4M576 363.500l7.500-9" /><text x="576.500" y="348">z</text><text x="584" y="354.500">y</text><text x="594" y="370">x</text>
            </svg>
            <span class="view-label">Perspective<i></i></span>
          </div>
          <div class="view">
            <svg class="scene" viewBox="99 390 450 248">
              <path class="minor" :d="frontGrid.minor" /><path class="major" :d="frontGrid.major" />
              <path class="green" d="M311 390V495" /><path class="red" d="M311 495H549" />
              <path d="M249.500 445.800H372.500" stroke="#111" stroke-width="1.300" />
              <path class="gnomon" d="M124.500 597v16.500h19" /><text x="124.500" y="595">z</text><text x="145.500" y="615.500">x</text>
              <path d="M484 440v11.500l2.700-2.400 1.700 3.900 1.800-.8-1.700-3.700h3.500z" fill="#fff" stroke="#333" stroke-width=".7" />
            </svg>
            <span class="view-label">Front<i></i></span>
          </div>
          <div class="view">
            <svg class="scene" viewBox="551 390 449 248">
              <path class="minor" :d="rightGrid.minor" /><path class="major" :d="rightGrid.major" />
              <path class="green" d="M775.500 390V514" /><path class="red" d="M775.500 514H1000" />
              <path d="M735.500 482H815.500" stroke="#111" stroke-width="1.300" />
              <path class="gnomon" d="M575.500 597v16.500h19" /><text x="575.500" y="595">z</text><text x="596.500" y="615.500">y</text>
            </svg>
            <span class="view-label">Right<i></i></span>
          </div>
        </div>
        <div class="view-tabs">
          <span v-for="t in viewTabs" :key="t.label" :class="{ on: t.label === 'Top' }" :style="{ width: t.w + 'px' }">{{ t.label }}</span>
        </div>
      </section>

      <aside class="panel">
        <div class="panel-tabs">
          <span v-for="(t, i) in panelTabs" :key="t.label" class="ptab" :class="{ on: i === 0 }" :style="{ width: t.w + 'px' }">
            <svg viewBox="0 0 18 18" v-html="svg(t.icon)"></svg>{{ t.label }}
          </span>
          <svg class="cog" viewBox="0 0 10 10"><circle cx="5" cy="5" r="3.600" fill="none" stroke="#888" stroke-width="1.200" stroke-dasharray="1.800 1" /><circle cx="5" cy="5" r="1.300" fill="none" stroke="#888" stroke-width=".7" /></svg>
        </div>
        <div class="props">
          <div v-for="g in groups" :key="g.title" class="group">
            <div class="group-title">{{ g.title }}</div>
            <div v-for="(r, i) in g.rows" :key="i" class="prop" :class="r.kind">
              <span class="name">{{ r.label }}</span>
              <span class="value">
                <svg v-if="r.kind === 'check'" class="box" viewBox="0 0 9 9"><rect x=".5" y=".5" width="8" height="8" fill="#fff" stroke="#333" stroke-width=".9" /><path d="M2 4.500l2 2 3.300-4" fill="none" stroke="#222" stroke-width=".9" /></svg>
                <template v-else>{{ r.value }}</template>
                <svg v-if="r.kind === 'select'" class="drop" viewBox="0 0 12 12"><rect x=".5" y=".5" width="11" height="11" fill="#e3e3e6" stroke="#a9a9ae" /><path d="M3.500 5l2.500 2.500L8.500 5" fill="none" stroke="#444" stroke-width=".9" /></svg>
                <span v-if="r.kind === 'file'" class="browse">...</span>
              </span>
            </div>
          </div>
        </div>
      </aside>
    </main>

    <section class="osnap">
      <label v-for="o in osnaps" :key="o.label" :class="o.label.toLowerCase()" :style="{ width: o.w + 'px' }">
        <svg viewBox="0 0 9 9"><rect class="cb" x=".5" y=".5" width="8" height="8" /><path v-if="o.label === 'Vertex'" d="M2 4.500l2 2 3.300-4" fill="none" stroke="#999" stroke-width=".9" /></svg>{{ o.label }}
      </label>
    </section>

    <footer class="status">
      <span v-for="s in statusCells" :key="s.label" :class="{ on: statusOn.includes(s.label), layer: s.label === 'Default' }" :style="{ width: s.w + 'px' }"><i v-if="s.label === 'Default'"></i>{{ s.label }}</span>
      <span class="memory">Available physical memory: 9385 MB</span>
    </footer>

    <footer class="taskbar">
      <div class="task win"><svg viewBox="0 0 14 14"><path d="M1 3l5-.8v4.400H1zM6.700 2.100L13 1.200v5.400H6.700zM1 7.300h5v4.500L1 11zM6.700 7.300H13v5.500l-6.300-.9z" fill="#fff" /></svg></div>
      <div class="task"><svg viewBox="0 0 14 14"><circle cx="8.300" cy="5.500" r="3.800" fill="none" stroke="#fff" stroke-width="1.100" /><path d="M5.500 8.500L1.800 12.500" stroke="#fff" stroke-width="1.200" /></svg></div>
      <div class="task"><svg viewBox="0 0 14 14" fill="none" stroke="#fff"><rect x="2" y="4.500" width="6" height="5" /><path d="M2 1.500v1.500h6V1.500M2 12.500V11h6v1.500M11 1.500v11M9.800 5h2.500" /></svg></div>
      <div class="task"><svg viewBox="0 0 14 14"><path d="M1 6.300C1.300 2.700 4 .6 7.200.6c3.700 0 6 2.600 6 6.300v1.400H4.800c.1 3 4.200 3.600 7.200 1.900v2.600c-4.700 2.200-10 .4-10-4.600 0-2.300 1.500-4 3.500-4.800C4.900 4 4.800 4.800 4.700 5.800h4.700C9.500 2.300 4 2.500 1 6.300z" fill="#2089e0" /></svg></div>
      <div class="task"><svg viewBox="0 0 14 14"><path d="M0 2h5l1 1.500h8V13H0z" fill="#f3cf6b" /><path d="M0 5h14v8H0z" fill="#fbe39a" /><path d="M2.500 13V8.500h9V13H9v-2H5v2z" fill="#3d9bd8" /></svg></div>
      <div class="task"><svg class="wide" viewBox="0 0 16 16"><path d="M0 4h16v11H0z" fill="#fff" /><path d="M5 4V1.500h6V4" fill="none" stroke="#fff" /><path d="M5 6h2.700v2.700H5z" fill="#e8492c" /><path d="M8.300 6H11v2.700H8.300z" fill="#7bb43a" /><path d="M5 9.300h2.700V12H5z" fill="#2b9be0" /><path d="M8.300 9.300H11V12H8.300z" fill="#f4b619" /></svg></div>
      <div class="task"><svg class="wide" viewBox="0 0 16 14"><path d="M0 5l8-4 8 4v8H0z" fill="#fff" /><path d="M1.500 5h13L9 8.500l1 2.500z" fill="#0b0f16" /></svg></div>
      <div class="task run"><svg viewBox="0 0 16 16"><rect width="16" height="16" rx="1" fill="#1273c4" /><circle cx="8" cy="8" r="6.500" fill="#fff" /><path d="M2.500 8l3.500-3v2h4V5l3.500 3-3.500 3V9H6v2z" fill="#1273c4" /></svg></div>
      <div class="task run"><svg viewBox="0 0 16 16"><circle cx="6" cy="6" r="5" fill="#12a5e4" /><circle cx="10" cy="10" r="5" fill="#12a5e4" /><circle cx="8" cy="8" r="6" fill="#12a5e4" /><text x="8" y="12.200" text-anchor="middle" font-size="11.500" font-weight="700" fill="#fff">S</text></svg></div>
      <div class="task run sel"><svg viewBox="0 0 18 16"><path d="M1 0l3 6 1.500-5L9 8.500l6 .5 1.500-3 .5 5-2.500 1 1.500 3-6-1-2 1.500-3-2L1.500 7z" fill="#e9e9e9" /><path d="M4 6l3.500 5 4 1" stroke="#555" fill="none" /></svg></div>
      <div class="task run"><svg viewBox="0 0 16 12"><path d="M0 0h8v6H0z" fill="#e8452c" /><path d="M8 0h8v6H8z" fill="#3fb24a" /><path d="M0 6h8v6H0z" fill="#d02f9a" /><path d="M8 6h8v6H8z" fill="#f5a11d" /><circle cx="8" cy="6" r="4" fill="#fff" /><path d="M6 4.500h4v3H6z" fill="#e3564a" /></svg></div>
      <div class="tray">
        <svg class="people" viewBox="0 0 12 12" fill="none" stroke="#ddd" stroke-width=".9"><circle cx="4.500" cy="5.500" r="2" /><path d="M1 11.500c0-4 7-4 7 0" /><circle cx="8.500" cy="3" r="2" /><path d="M8 6c2 0 3.500 1 3.500 3" /></svg>
        <svg class="chev" viewBox="0 0 10 10" fill="none" stroke="#ddd"><path d="M1 7l4-4 4 4" /></svg>
        <svg class="wifi" viewBox="0 0 10 10" fill="none" stroke="#ccc" stroke-width=".9"><path d="M1 9.500c0-5 3.500-8 8.500-8.500M3.500 9.500c0-3.500 2.500-5.500 6-6M6 9.500c0-2 1.500-3.300 3.500-3.500" /><circle cx="8.500" cy="8.700" r=".9" fill="#ccc" /></svg>
        <svg class="vol" viewBox="0 0 12 10" fill="none" stroke="#ddd" stroke-width=".8"><path d="M1 3.500h2L5.500 1v8L3 6.500H1z" /><path d="M7 3.500c.8 1 .8 2 0 3" /><path d="M8.700 2c1.600 2 1.600 4 0 6M10.300 1c2 2.500 2 5.500 0 8" stroke="#777" /></svg>
        <span class="lang">ENG</span>
        <span class="clock">20:24<br />03.08.2019</span>
        <svg class="note" viewBox="0 0 12 12" fill="none" stroke="#ddd"><path d="M1 1.500h10v7.500H8L6 11 4 9H1z" /></svg>
      </div>
    </footer>

    <div class="call">
      <div class="avatar">AT</div>
      <div class="call-btns">
        <span class="round"><svg viewBox="0 0 26 26" fill="none" stroke="#222" stroke-width="1.100"><rect x="10.500" y="6" width="5" height="9" rx="2.500" /><path d="M8 12.500c0 7 10 7 10 0M13 17.800v2.700" /></svg></span>
        <span class="round bare"><svg viewBox="0 0 26 26" fill="none" stroke="#fff" stroke-width="1.100"><path d="M6 8.500h10v9.500H6zM16 12l4-3v8.500l-4-3M5 20.500L21 6" /></svg></span>
        <span class="round hang"><svg viewBox="0 0 26 26" fill="none" stroke="#fff" stroke-width="1.100"><path d="M6 13.500c2-5 12-5 14 0 .3 1.500-.2 2.500-1.200 2.200l-2.300-.8c-.8-.3-.7-1.500-.7-2.200-1.700-.7-3.900-.7-5.600 0 0 .7.100 1.900-.7 2.200l-2.300.8C6.200 16 5.700 15 6 13.500z" /></svg></span>
        <span class="round"><svg viewBox="0 0 26 26" fill="none" stroke="#222" stroke-width="1.100"><rect x="7" y="12" width="9" height="8" /><path d="M11 12V7h9v8h-4" /></svg></span>
      </div>
    </div>
  </div>
</template>

<style>
body {
  margin: 0;
  background: #dfe2ea;
}
</style>

<style scoped>
.app {
  position: relative;
  width: 1280px;
  height: 720px;
  display: flex;
  flex-direction: column;
  overflow: hidden;
  background: #dfe2ea;
  font-family: 'Liberation Sans', Arial, sans-serif;
  font-size: 7.5px;
  line-height: 1;
  color: #222;
  white-space: nowrap;
}

.app svg {
  display: block;
  flex: none;
}

.app .defs {
  position: absolute;
}

.title-bar {
  display: flex;
  align-items: center;
  height: 14px;
  background: #fff;
  font-family: 'Open Sans', 'Noto Sans', sans-serif;
  font-size: 7.7px;
}

.app-icon {
  width: 10px;
  height: 10px;
  margin-right: 2px;
}

.title {
  flex: 1;
  padding-top: 1px;
}

.win-btns {
  width: 72px;
  height: 12px;
  margin-right: 8px;
}

.menu {
  display: flex;
  align-items: center;
  height: 14px;
  padding-left: 3.5px;
  background: #fff;
  font-family: 'Open Sans', 'Noto Sans', sans-serif;
  font-size: 7.5px;
}

.menu span {
  flex: none;
  padding-top: 1px;
}

.command {
  box-sizing: border-box;
  display: grid;
  grid-template: 19px 13px / 1fr 10px;
  height: 34px;
  padding-left: 3px;
  border-top: 1px solid #b7bac3;
  border-bottom: 1px solid #b7bac3;
  background: #d3d7e1;
}

.history,
.prompt {
  display: flex;
  align-items: center;
  padding-left: 1.5px;
  background: #fff;
  font-size: 8px;
}

.history {
  padding-bottom: 6px;
}

.prompt {
  border-top: 1px solid #a9b4c8;
}

.caret {
  width: 1px;
  height: 9px;
  margin-left: 2px;
  background: #222;
}

.spin {
  grid-row: 1 / 3;
  grid-column: 2;
  width: 10px;
  height: 32px;
}

.toolbar {
  box-sizing: border-box;
  display: flex;
  flex-direction: column;
  border-left: 2px solid #c9cdd8;
}

.std {
  height: 40px;
  border-bottom: 2px solid #ccd0da;
}

.cam {
  height: 38px;
}

.tabs {
  box-sizing: border-box;
  display: flex;
  align-items: flex-end;
  height: 15px;
  padding-left: 7px;
  border-bottom: 1px solid #b4b9c6;
  background: #dde0e9;
}

.cam .tabs {
  height: 13px;
}

.tab {
  box-sizing: border-box;
  position: relative;
  flex: none;
  height: 11px;
  padding-top: 2px;
  border-top: 1px solid #b0b7ca;
  background: #d1d8e6;
}

.tab::after {
  position: absolute;
  content: '';
  right: 4.5px;
  top: -1px;
  width: 4px;
  height: 11px;
  border-right: 1px solid #a8b1c6;
  transform: skewX(-28deg);
}

.tab.on {
  z-index: 1;
  height: 12px;
  margin-bottom: -1px;
  background: linear-gradient(90deg, #fff calc(100% - 7px), transparent 0);
  box-shadow: -5px 0 0 #fff;
}

.tab.on::after {
  height: 12px;
  background: #fff;
}

.cog {
  width: 11px;
  height: 11px;
  margin-left: auto;
}

.icons {
  display: flex;
  align-items: flex-start;
  flex: 1;
  padding-top: 1px;
  padding-left: 1px;
  background: linear-gradient(#fafbfd, #e0e3eb);
}

.cam .icons {
  padding-top: 0;
}

.icons svg {
  width: 18.75px;
  height: 18px;
}

.work {
  display: flex;
  height: 512px;
}

.bar {
  box-sizing: border-box;
  border-right: 1px solid #bcc0cb;
}

.main-bar {
  width: 40px;
}

.pair {
  display: grid;
  grid-template-columns: 18.7px 18.7px;
  grid-auto-rows: 18.65px;
  border-top: 1px solid #b9bdc8;
}

.pair svg {
  width: 18.7px;
  height: 18.65px;
}

.first {
  margin-top: 2px;
  padding-top: 2px;
}

.second {
  margin-top: 10px;
  padding-top: 4px;
}

.side-tabs {
  display: flex;
  flex-direction: column;
  width: 14px;
}

.vtab {
  box-sizing: border-box;
  display: flex;
  align-items: center;
  justify-content: center;
  width: 12px;
  height: 22px;
  margin-left: 2px;
  border: 1px solid #b4b9c6;
  border-right: none;
  border-radius: 5px 0 0 5px;
  background: #d3d9e6;
  opacity: 0.8;
}

.vtab.on {
  height: 24px;
  margin-top: 2px;
  background: #e6e8ef;
}

.vtab svg {
  width: 11px;
  height: 11px;
}

.cog.low {
  margin: auto 0 1px 3px;
}

.side-bar {
  width: 45px;
  border-left: 1px solid #a9adb8;
  border-right: none;
}

.side-bar .pair {
  grid-template-columns: 19.5px 18.7px;
}

.stage {
  width: 901px;
}

.views {
  display: grid;
  grid-template: 248px 248px / 450px 449px;
  gap: 2px;
}

.view {
  position: relative;
  overflow: hidden;
  background: #9fa4ad;
}

.scene {
  width: 100%;
  height: 100%;
}

.scene text {
  font-size: 9px;
  fill: #555a63;
}

.minor {
  fill: none;
  stroke: #969ba4;
  stroke-width: 0.8;
}

.major {
  fill: none;
  stroke: #8a8f98;
  stroke-width: 1;
}

.green {
  fill: none;
  stroke: #3b9a3b;
  stroke-width: 1.2;
}

.red {
  fill: none;
  stroke: #a5403f;
  stroke-width: 1.2;
}

.gnomon {
  fill: none;
  stroke: #666b74;
  stroke-width: 0.8;
}

.view-label {
  position: absolute;
  top: 0;
  left: 1px;
  display: flex;
  align-items: center;
  height: 12px;
  padding: 0 1px 0 5px;
  background: #c3c6cd;
  font-size: 8px;
  letter-spacing: -0.1px;
  color: #444;
}

.view-label.active {
  background: #86a5cc;
  color: #16233c;
}

.view-label i {
  height: 9px;
  margin-left: 4.5px;
  padding-left: 1px;
  border-left: 1px solid #444;
}

.view-label i::after {
  display: block;
  content: '';
  margin-top: 3px;
  border: 2px solid transparent;
  border-top: 3px solid #222;
}

.view-tabs {
  display: flex;
  height: 14px;
  margin-left: 1px;
}

.view-tabs span {
  box-sizing: border-box;
  height: 13px;
  padding-top: 4px;
  border: 1px solid #b0b6c4;
  border-top: none;
  border-left: none;
  border-radius: 0 0 5px 5px;
  background: #cfd5e2;
  text-align: center;
}

.view-tabs .on {
  background: #fff;
}

.panel {
  flex: 1;
  margin-left: 5px;
  border-left: 1px solid #aeb3c0;
}

.panel-tabs {
  box-sizing: border-box;
  display: flex;
  align-items: flex-end;
  height: 18px;
  margin-top: 1px;
  border-top: 1px solid #b9bdc8;
}

.ptab {
  box-sizing: border-box;
  position: relative;
  display: flex;
  align-items: center;
  gap: 2px;
  height: 15px;
  padding-left: 2px;
  border-top: 1px solid #b4b9c6;
  background: #d1d8e6;
  font-size: 8px;
  letter-spacing: -0.2px;
}

.ptab::after {
  position: absolute;
  z-index: 1;
  content: '';
  right: -4px;
  top: 0;
  width: 6px;
  height: 14px;
  border-right: 1px solid #b4b9c6;
  background: #d1d8e6;
  transform: skewX(35deg);
}

.ptab.on,
.ptab.on::after {
  background: #f8f8fb;
}

.ptab svg {
  z-index: 2;
  width: 11px;
  height: 11px;
}

.panel-tabs .cog {
  margin-bottom: 1px;
}

.props {
  box-sizing: border-box;
  height: 492px;
  padding: 5px 4px 0 2px;
  border-bottom: 1px solid #b0b3bd;
  background: #f5f5f9;
  font-size: 8px;
  letter-spacing: -0.25px;
}

.group-title {
  box-sizing: border-box;
  height: 15.2px;
  padding: 4px 0 0 2px;
}

.prop {
  display: grid;
  grid-template-columns: 134px 1fr;
  height: 12.7px;
  background: #fff;
  box-shadow: inset 0 1px #e4e4ea;
}

.name {
  display: flex;
  align-items: center;
  margin-left: 3px;
  padding-left: 4px;
  border-left: 1px solid #e8e8ee;
}

.value {
  display: flex;
  align-items: center;
  justify-content: space-between;
  padding-left: 2px;
  border-left: 1px solid #dcdce4;
}

.disabled {
  color: #888;
}

.disabled .value {
  background: #dfe1ea;
}

.button .value {
  justify-content: center;
  margin: 1px 0;
  border: 1px solid #acacb2;
  background: #e1e1e3;
}

.box {
  width: 9px;
  height: 9px;
}

.drop {
  width: 12px;
  height: 12px;
}

.browse {
  box-sizing: border-box;
  width: 11px;
  height: 11px;
  border: 1px solid #b4b4ba;
  background: #e3e3e6;
  text-align: center;
}

.osnap {
  box-sizing: border-box;
  display: flex;
  align-items: center;
  height: 28px;
  padding: 0 0 5px 4px;
  border-left: 2px solid #c9cdd8;
  font-size: 7.8px;
  letter-spacing: -0.3px;
  color: #858993;
}

.osnap label {
  display: flex;
  align-items: center;
  flex: none;
  gap: 3px;
}

.osnap svg {
  width: 9px;
  height: 9px;
}

.cb {
  fill: #fbfbfd;
  stroke: #c4c7cf;
}

.project .cb {
  fill: #c5c5c8;
}

.disable {
  color: #222;
}

.disable .cb {
  fill: #8a8a8a;
  stroke: #2f74b8;
}

.status {
  box-sizing: border-box;
  display: flex;
  height: 15px;
  border-top: 1px solid #a9adb8;
}

.status span {
  box-sizing: border-box;
  display: flex;
  align-items: center;
  justify-content: center;
  border-right: 1px solid #a9adb8;
  font-size: 8.1px;
}

.status .on {
  background: #e4f0fb;
  font-weight: 700;
}

.status .layer {
  justify-content: flex-start;
  padding-left: 3px;
}

.layer i {
  width: 9px;
  height: 9px;
  margin-right: 2px;
  background: #000;
}

.status .memory {
  border: none;
  padding-left: 2px;
}

.taskbar {
  display: flex;
  height: 25px;
  background: #0a0e15;
}

.task {
  box-sizing: border-box;
  display: flex;
  align-items: center;
  justify-content: center;
  width: 32.8px;
  height: 25px;
  border-bottom: 1px solid transparent;
}

.win {
  width: 31px;
}

.task svg {
  width: 14px;
  height: 14px;
}

.task .wide {
  width: 16px;
}

.run {
  border-image: linear-gradient(90deg, transparent 3px, #4f86bd 3px 29px, transparent 29px) 1;
}

.run svg {
  width: 16px;
  height: 16px;
}

.sel {
  background: #36393f;
}

.tray {
  display: flex;
  align-items: center;
  margin-left: auto;
  color: #e3e3e3;
  font-family: 'Open Sans', 'Noto Sans', sans-serif;
}

.people {
  width: 11px;
  height: 12px;
  margin-right: 14px;
}

.chev {
  width: 9px;
  height: 9px;
  margin-right: 8px;
}

.wifi {
  width: 9px;
  height: 9px;
  margin-right: 5px;
}

.vol {
  width: 12px;
  height: 10px;
  margin-right: 6px;
}

.lang {
  width: 24px;
  font-size: 8px;
}

.clock {
  width: 38px;
  font-size: 7.5px;
  line-height: 11.5px;
  text-align: center;
}

.note {
  width: 12px;
  height: 12px;
  margin: 0 14px 0 12px;
}

/* floating call window */
.call {
  position: absolute;
  top: 19px;
  left: 1068px;
  display: flex;
  flex-direction: column;
  align-items: center;
  width: 193px;
  height: 121px;
  background: #2b2c33;
  box-shadow: 0 0 3px rgba(0, 0, 0, 0.4);
}

.avatar {
  box-sizing: border-box;
  width: 53px;
  height: 53px;
  margin-top: 35px;
  border: 1px solid #1b7fce;
  border-radius: 50%;
  background: #e6e7ec;
  color: #1274bf;
  font: 700 12.5px/52px 'Open Sans', sans-serif;
  text-align: center;
}

.call-btns {
  display: flex;
  gap: 13.5px;
}

.round {
  width: 26.6px;
  height: 26.6px;
  border-radius: 50%;
  background: #fff;
}

.bare {
  background: none;
}

.hang {
  background: #f03c37;
}
</style>
